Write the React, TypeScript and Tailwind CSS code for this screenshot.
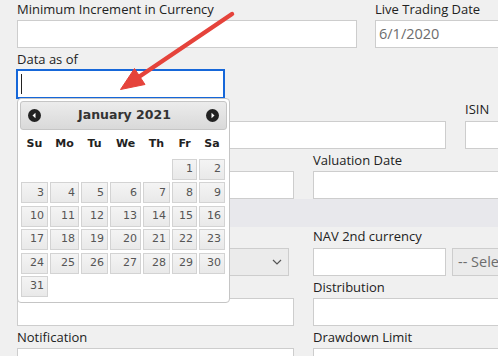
import React from 'react';

const Label = ({ text = '', className = '' }: { text?: string; className?: string }) => (
  <div className={`leading-[18px] whitespace-nowrap ${className}`}>{text}</div>
);

const Box = ({ className = '', children }: { className?: string; children?: React.ReactNode }) => (
  <div className={`h-[28px] border border-[#cdcdcd] bg-white flex items-center px-[3px] ${className}`}>{children}</div>
);

const Chevron = () => (
  <svg width="10" height="6" viewBox="0 0 10 6" className="shrink-0">
    <polyline points="1,1 5,5 9,1" fill="none" stroke="#555" strokeWidth="1.2" />
  </svg>
);

const NavIcon = ({ dir }: { dir: 'prev' | 'next' }) => (
  <svg width="13" height="13" viewBox="0 0 13 13">
    <circle cx="6.5" cy="6.5" r="6.5" fill="#222" />
    {dir === 'prev' ? (
      <polygon points="4.5,6.5 7.5,3.8 7.5,9.2" fill="#fff" />
    ) : (
      <polygon points="8.5,6.5 5.5,3.8 5.5,9.2" fill="#fff" />
    )}
  </svg>
);

const days: (number | null)[] = [
  null, null, null, null, null, 1, 2,
  ...Array.from({ length: 29 }, (_, i) => i + 3),
];
const dayNames = ['Su', 'Mo', 'Tu', 'We', 'Th', 'Fr', 'Sa'];

const Datepicker = () => (
  <div className="absolute left-[17px] top-[98px] w-[213px] rounded-[4px] border border-[#c5c5c5] bg-white p-[2px] font-['DejaVu_Sans',Verdana,sans-serif]">
    <div className="h-[29px] rounded-[3px] border border-[#c5c5c5] bg-gradient-to-b from-[#ececec] to-[#d9d9d9] flex items-center justify-between px-[7px]">
      <NavIcon dir="prev" />
      <span className="text-[12.5px] font-bold text-[#333] pl-[2px]">January 2021</span>
      <NavIcon dir="next" />
    </div>
    <div className="ml-[1px] grid grid-cols-[27px_29px_27px_31px_27px_25px_26px] gap-x-[2px]">
      {dayNames.map((d) => (
        <div key={d} className="h-[28px] flex items-center justify-center text-[11px] font-bold text-[#222]">
          {d}
        </div>
      ))}
    </div>
    <div className="mt-[1px] mb-[3px] ml-[1px] grid grid-cols-[27px_29px_27px_31px_27px_25px_26px] gap-x-[2px] gap-y-[2.4px]">
      {days.map((d, i) =>
        d === null ? (
          <div key={i} className="h-[21px]" />
        ) : (
          <div
            key={i}
            className="h-[21px] border border-[#d3d3d3] bg-gradient-to-b from-[#f4f4f4] to-[#e9e9e9] text-[11px] text-[#555] flex items-center justify-end pr-[3px]"
          >
            {d}
          </div>
        )
      )}
    </div>
  </div>
);

export default function App() {
  return (
    <div className="relative w-[498px] h-[356px] overflow-hidden bg-[#f0f0f0] text-[13px] text-[#222] font-['Open_Sans',sans-serif]">
      {/* row 1 */}
      <div className="flex pl-[17px]">
        <div className="w-[340px] shrink-0">
          <Label text="Minimum Increment in Currency" className="h-[20px]" />
          <Box />
        </div>
        <div className="ml-[18px] w-[200px] shrink-0">
          <Label text="Live Trading Date" className="h-[20px]" />
          <Box className="text-[14.5px] text-[#6d6d6d]">6/1/2020</Box>
        </div>
      </div>

      {/* row 2 */}
      <div className="mt-[2px] pl-[16px]">
        <Label text="Data as of" className="h-[19px] pl-[1px]" />
        <div className="w-[209px] h-[30px] border-2 border-[#1667d9] bg-white flex items-center pl-[3px]">
          <div className="w-px h-[20px] bg-[#222]" />
        </div>
      </div>

      {/* row 3 */}
      <div className="mt-[1px] flex pl-[17px]">
        <div className="w-[429px] shrink-0">
          <Label className="h-[21px]" />
          <Box />
        </div>
        <div className="ml-[19px] w-[200px] shrink-0">
          <Label text="ISIN" className="h-[21px]" />
          <Box />
        </div>
      </div>

      {/* row 4 */}
      <div className="mt-[2px] flex pl-[17px]">
        <div className="w-[277px] shrink-0">
          <Label className="h-[20px]" />
          <Box />
        </div>
        <div className="ml-[19px] w-[200px] shrink-0">
          <Label text="Valuation Date" className="h-[20px]" />
          <Box />
        </div>
      </div>

      {/* section band */}
      <div className="ml-[17px] h-[28px] bg-[#e8e8ec]" />

      {/* row 5 */}
      <div className="flex pl-[17px]">
        <div className="w-[272px] shrink-0">
          <Label className="h-[21px]" />
          <div className="h-[28px] border border-[#cdcdcd] bg-[#ebebeb] flex items-center justify-end pr-[6px]">
            <Chevron />
          </div>
        </div>
        <div className="ml-[24px] shrink-0">
          <Label text="NAV 2nd currency" className="h-[21px]" />
          <div className="flex">
            <Box className="w-[133px]" />
            <div className="ml-[6px] w-[110px] h-[28px] border border-[#cdcdcd] bg-[#ebebeb] flex items-center pl-[5px] text-[14.5px] text-[#6d6d6d] whitespace-nowrap">
              -- Select --
            </div>
          </div>
        </div>
      </div>

      {/* row 6 */}
      <div className="flex pl-[17px]">
        <div className="w-[277px] shrink-0">
          <Label className="h-[22px] pt-[2px]" />
          <Box />
        </div>
        <div className="ml-[19px] w-[200px] shrink-0">
          <Label text="Distribution" className="h-[22px] pt-[2px]" />
          <Box />
        </div>
      </div>

      {/* row 7 */}
      <div className="flex pl-[17px]">
        <div className="w-[277px] shrink-0">
          <Label text="Notification" className="h-[22px] pt-[2px]" />
          <Box />
        </div>
        <div className="ml-[19px] w-[200px] shrink-0">
          <Label text="Drawdown Limit" className="h-[22px] pt-[2px]" />
          <Box />
        </div>
      </div>

      <Datepicker />

      {/* annotation arrow */}
      <svg className="absolute inset-0 pointer-events-none" width="498" height="356" viewBox="0 0 498 356">
        <line x1="232" y1="14" x2="138" y2="77.5" stroke="#e5433b" strokeWidth="4.5" strokeLinecap="round" />
        <polygon points="120.5,89.5 145,84.5 134.5,68.5" fill="#e5433b" stroke="#e5433b" strokeWidth="1" strokeLinejoin="round" />
      </svg>
    </div>
  );
}
